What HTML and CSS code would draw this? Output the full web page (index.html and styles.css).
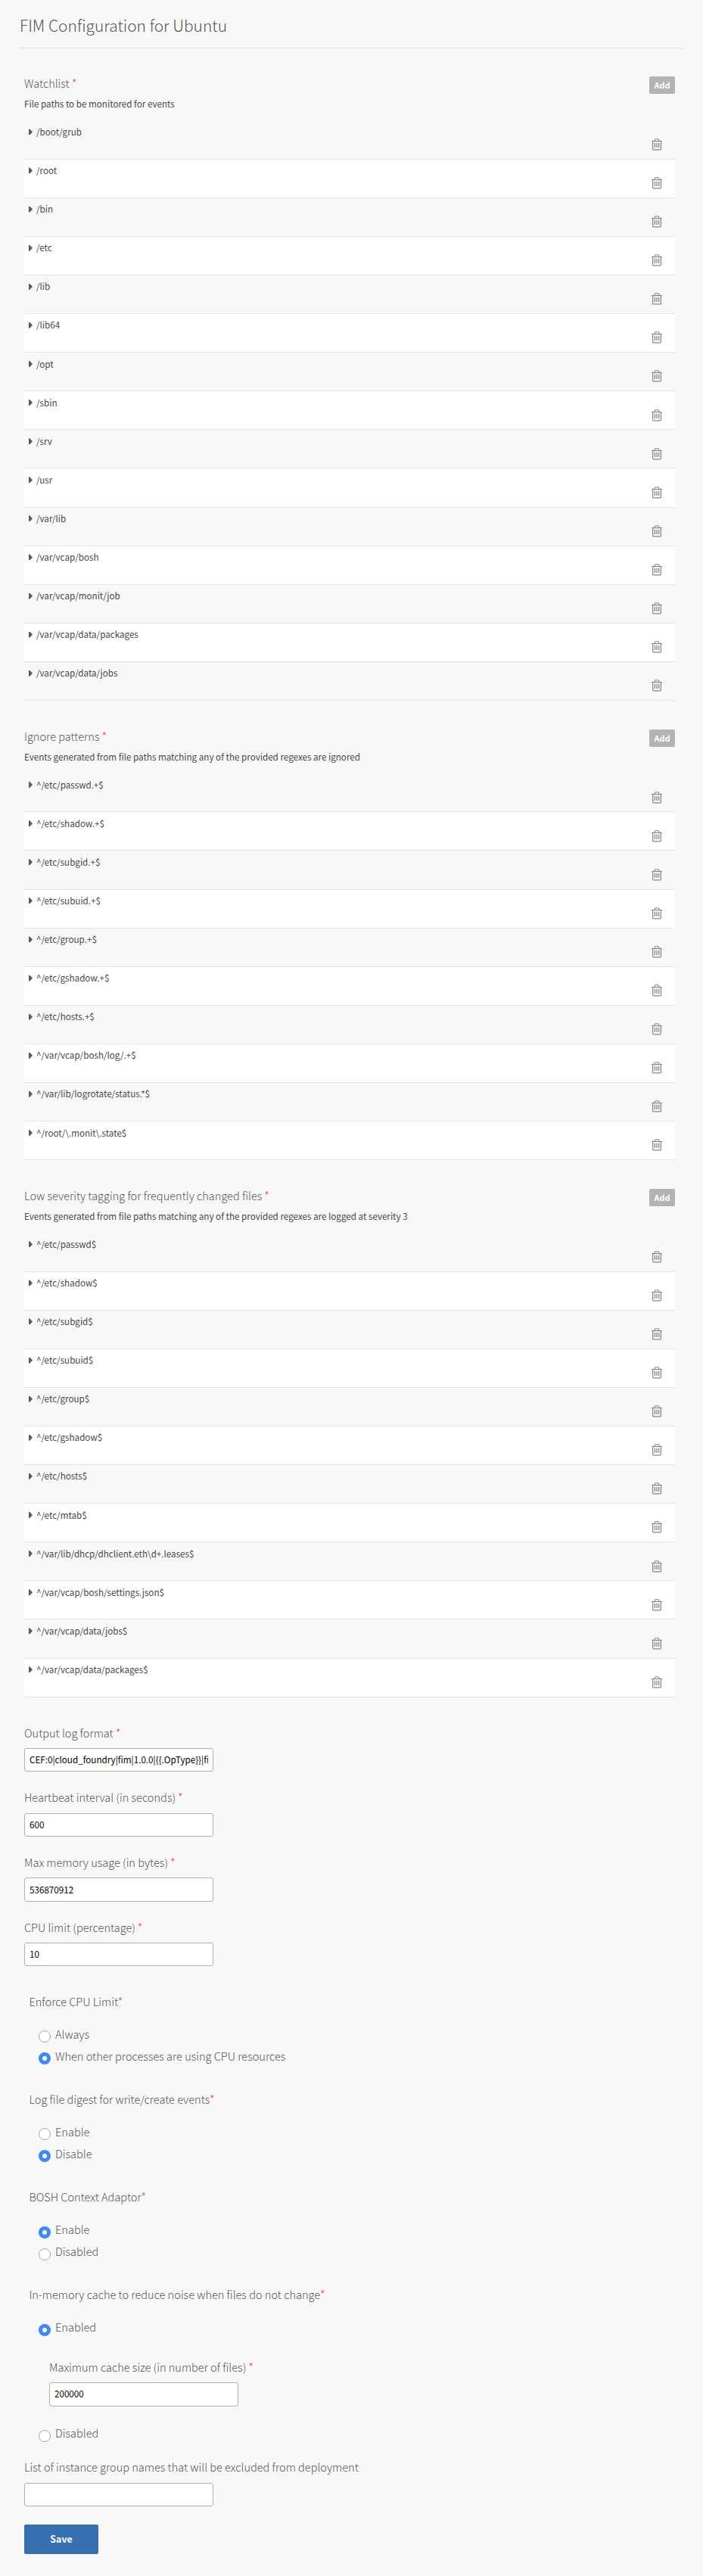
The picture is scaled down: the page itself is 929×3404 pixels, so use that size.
FILE: index.html
```html
<!DOCTYPE html>
<html lang="en">
<head>
<meta charset="utf-8">
<title>FIM Configuration for Ubuntu</title>
<link rel="stylesheet" href="styles.css">
</head>
<body>
<svg class="sprite" aria-hidden="true">
  <symbol id="trash" viewBox="0 0 14 16">
    <g fill="none" stroke="currentColor">
      <path d="M0.3 3.5h13.4" stroke-width="1.2"/>
      <path d="M4 3.2C4 1.4 4.600 .7 5.500 .7h3c.9 0 1.500.7 1.500 2.500" stroke-width="1.100"/>
      <path d="M1.600 3.500v10.200c0 .8.4 1.200 1.200 1.200h8.400c.8 0 1.200-.4 1.200-1.200v-10.200" stroke-width="1.200"/>
      <path d="M4.400 5.800v6.200M7 5.800v6.200M9.600 5.800v6.200" stroke-width="1.300"/>
    </g>
  </symbol>
</svg>
<form class="page">
  <h1 class="page-title">FIM Configuration for Ubuntu</h1>

  <section class="collection" data-items='["/boot/grub","/root","/bin","/etc","/lib","/lib64","/opt","/sbin","/srv","/usr","/var/lib","/var/vcap/bosh","/var/vcap/monit/job","/var/vcap/data/packages","/var/vcap/data/jobs"]'>
    <header class="collection-head">
      <div>
        <h2 class="label">Watchlist <span class="req">*</span></h2>
        <p class="hint">File paths to be monitored for events</p>
      </div>
      <button type="button" class="add">Add</button>
    </header>
    <ul class="rows"></ul>
  </section>

  <section class="collection" data-items='["^/etc/passwd.+$","^/etc/shadow.+$","^/etc/subgid.+$","^/etc/subuid.+$","^/etc/group.+$","^/etc/gshadow.+$","^/etc/hosts.+$","^/var/vcap/bosh/log/.+$","^/var/lib/logrotate/status.*$","^/root/\\.monit\\.state$"]'>
    <header class="collection-head">
      <div>
        <h2 class="label">Ignore patterns <span class="req">*</span></h2>
        <p class="hint">Events generated from file paths matching any of the provided regexes are ignored</p>
      </div>
      <button type="button" class="add">Add</button>
    </header>
    <ul class="rows"></ul>
  </section>

  <section class="collection" data-items='["^/etc/passwd$","^/etc/shadow$","^/etc/subgid$","^/etc/subuid$","^/etc/group$","^/etc/gshadow$","^/etc/hosts$","^/etc/mtab$","^/var/lib/dhcp/dhclient.eth\\d+.leases$","^/var/vcap/bosh/settings.json$","^/var/vcap/data/jobs$","^/var/vcap/data/packages$"]'>
    <header class="collection-head">
      <div>
        <h2 class="label">Low severity tagging for frequently changed files <span class="req">*</span></h2>
        <p class="hint">Events generated from file paths matching any of the provided regexes are logged at severity 3</p>
      </div>
      <button type="button" class="add">Add</button>
    </header>
    <ul class="rows"></ul>
  </section>

  <div class="fields">
    <label class="field"><span class="label">Output log format <span class="req">*</span></span><input class="input" type="text" value="CEF:0|cloud_foundry|fim|1.0.0|{{.OpType}}|fi"></label>
    <label class="field"><span class="label">Heartbeat interval (in seconds) <span class="req">*</span></span><input class="input" type="text" value="600"></label>
    <label class="field"><span class="label">Max memory usage (in bytes) <span class="req">*</span></span><input class="input" type="text" value="536870912"></label>
    <label class="field"><span class="label">CPU limit (percentage) <span class="req">*</span></span><input class="input" type="text" value="10"></label>
  </div>

  <div class="groups">
    <div class="group">
      <div class="label">Enforce CPU Limit<span class="req">*</span></div>
      <div class="options">
        <label class="option"><input type="radio" name="cpu" class="radio">Always</label>
        <label class="option"><input type="radio" name="cpu" class="radio" checked>When other processes are using CPU resources</label>
      </div>
    </div>
    <div class="group">
      <div class="label">Log file digest for write/create events<span class="req">*</span></div>
      <div class="options">
        <label class="option"><input type="radio" name="digest" class="radio">Enable</label>
        <label class="option"><input type="radio" name="digest" class="radio" checked>Disable</label>
      </div>
    </div>
    <div class="group">
      <div class="label">BOSH Context Adaptor<span class="req">*</span></div>
      <div class="options">
        <label class="option"><input type="radio" name="bosh" class="radio" checked>Enable</label>
        <label class="option"><input type="radio" name="bosh" class="radio">Disabled</label>
      </div>
    </div>
    <div class="group">
      <div class="label">In-memory cache to reduce noise when files do not change<span class="req">*</span></div>
      <div class="options">
        <label class="option"><input type="radio" name="cache" class="radio" checked>Enabled</label>
        <label class="field nested"><span class="label">Maximum cache size (in number of files) <span class="req">*</span></span><input class="input" type="text" value="200000"></label>
        <label class="option"><input type="radio" name="cache" class="radio">Disabled</label>
      </div>
    </div>
  </div>

  <label class="field excluded"><span class="label">List of instance group names that will be excluded from deployment</span><input class="input" type="text" value=""></label>
  <button type="button" class="save">Save</button>
</form>
<script src="rows.js"></script>
</body>
</html>
```

FILE: styles.css
```css
* { box-sizing: border-box; }

body {
  margin: 0;
  background: #f8f8f8;
  color: #555;
  font-family: "Noto Sans CJK SC", "Open Sans", sans-serif;
  font-size: 12px;
}

.sprite { display: none; }

.page {
  display: flex;
  flex-direction: column;
  height: 3404px;
  padding: 0 25px 0 26px;
}

.page-title {
  height: 64px;
  margin: 0 0 34px;
  padding-top: 17px;
  border-bottom: 1px solid #dfdfdf;
  font-size: 20.95px;
  font-weight: 300;
  line-height: 33px;
}

.label {
  display: block;
  height: 24px;
  margin: 0;
  font-size: 14.55px;
  font-weight: 300;
  line-height: 24px;
  white-space: nowrap;
}

.req { color: #ff5a4a; font-size: 13.5px; font-weight: 400; line-height: 1; vertical-align: 1px; }

.collection { margin: 0 12px 34.4px 6px; }

.collection-head {
  display: flex;
  justify-content: space-between;
  height: 61.6px;
}

.hint { margin: 5px 0 0; line-height: 20px; font-size: 11.65px; color: #484848; }

.add {
  width: 34px;
  height: 23px;
  margin-top: 3.2px;
  padding: 0;
  border: 0;
  border-radius: 2px;
  background: #b3b3b3;
  color: #fff;
  font: 700 10.8px/23px "Noto Sans CJK SC", sans-serif;
}

.rows { margin: 0; padding: 0 0 0.3px; list-style: none; }

.row {
  display: grid;
  grid-template-columns: 10px 1fr 14px;
  height: 51.1px;
  padding: 0 17px 0 6px;
  border-bottom: 1px solid #e5e5e5;
}

.row:nth-child(even) { background: #fff; }

.caret {
  width: 5px;
  height: 8px;
  margin-top: 10.8px;
  background: #5a5a5a;
  clip-path: polygon(0 0, 25% 0, 100% 50%, 25% 100%, 0 100%);
}

.row-text { margin-top: 4.4px; line-height: 20px; font-size: 11.65px; color: #484848; }

.trash { width: 14px; height: 16px; margin-top: 23.3px; color: #858585; }

.fields { margin: 0.3px 0 0 6px; }

.field { display: block; height: 85.7px; }

.input {
  display: block;
  width: 250px;
  height: 31.3px;
  margin-top: 8.4px;
  padding: 0 6px 2px;
  border: 1px solid #b0b0b0;
  border-radius: 3px;
  background: #fff;
  color: #000;
  font: 400 11.65px "Noto Sans CJK SC", sans-serif;
}

.groups { margin: 12.4px 0 0 12.4px; }

.group { margin-bottom: 31.3px; }

.options { padding: 15.8px 0 0 12.6px; }

.option {
  display: flex;
  gap: 6px;
  height: 29px;
  font-size: 14.55px;
  font-weight: 300;
  line-height: 29px;
}

.radio {
  appearance: none;
  flex: none;
  width: 16px;
  height: 16px;
  margin: 10.8px 0 0;
  border: 1px solid #a8a8a8;
  border-radius: 50%;
  background: #fff;
}

.radio:checked { border: 5px solid #3b88fd; }

.nested { height: 84px; margin: 27px 0 0 14px; }

.excluded { height: 87.6px; margin: -12px 0 0 6px; }

.save {
  width: 98px;
  height: 39px;
  margin-left: 6px;
  padding: 0;
  border: 0;
  border-radius: 2px;
  background: #3770b0;
  color: #fff;
  font: 700 12.4px/37px "Noto Sans CJK SC", sans-serif;
}
```

FILE: rows.js
```js
// Fills each collection with its rows.
document.querySelectorAll(".collection").forEach((section) => {
  const list = section.querySelector(".rows");
  JSON.parse(section.dataset.items).forEach((text) => {
    const row = document.createElement("li");
    row.className = "row";
    row.innerHTML =
      '<span class="caret"></span><span class="row-text"></span>' +
      '<svg class="trash"><use href="#trash"/></svg>';
    row.querySelector(".row-text").textContent = text;
    list.append(row);
  });
});
```
